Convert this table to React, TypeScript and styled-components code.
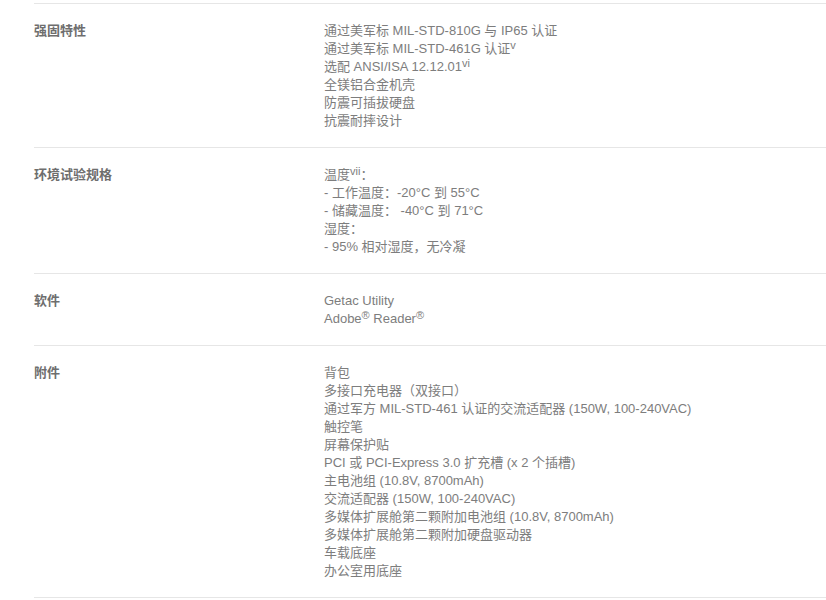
import React from 'react';
import styled, { createGlobalStyle } from 'styled-components';

const GlobalStyle = createGlobalStyle`
  html, body {
    margin: 0;
    padding: 0;
    background: #fff;
  }
  body {
    font-family: "Liberation Sans", "Noto Sans CJK SC", sans-serif;
    font-size: 13px;
  }
`;

const SpecTable = styled.section`
  padding-top: 3px;
  margin-left: 34px;
  border-bottom: 1px solid #e6e6e6;
`;

const SpecRow = styled.div`
  display: grid;
  grid-template-columns: 290px 1fr;
  border-top: 1px solid #e6e6e6;
  padding: 18px 0 17px;
`;

const Label = styled.div`
  font-weight: bold;
  color: #6e6e6e;
  line-height: 18px;
`;

const Values = styled.ul`
  list-style: none;
  margin: 0;
  padding: 0;
  color: #7d7d7d;
  line-height: 18px;
`;

const Sup = styled.sup`
  font-size: 11px;
  line-height: 0;
  vertical-align: 4px;
`;

type Spec = { label: string; items: React.ReactNode[] };

const specs: Spec[] = [
  {
    label: '强固特性',
    items: [
      '通过美军标 MIL-STD-810G 与 IP65 认证',
      <>通过美军标 MIL-STD-461G 认证<Sup>v</Sup></>,
      <>选配 ANSI/ISA 12.12.01<Sup>vi</Sup></>,
      '全镁铝合金机壳',
      '防震可插拔硬盘',
      '抗震耐摔设计',
    ],
  },
  {
    label: '环境试验规格',
    items: [
      <>温度<Sup>vii</Sup>：</>,
      '- 工作温度：-20°C 到 55°C',
      '- 储藏温度： -40°C 到 71°C',
      '湿度：',
      '- 95% 相对湿度，无冷凝',
    ],
  },
  {
    label: '软件',
    items: ['Getac Utility', <>Adobe<Sup>®</Sup> Reader<Sup>®</Sup></>],
  },
  {
    label: '附件',
    items: [
      '背包',
      '多接口充电器（双接口）',
      '通过军方 MIL-STD-461 认证的交流适配器 (150W, 100-240VAC)',
      '触控笔',
      '屏幕保护贴',
      'PCI 或 PCI-Express 3.0 扩充槽 (x 2 个插槽)',
      '主电池组 (10.8V, 8700mAh)',
      '交流适配器 (150W, 100-240VAC)',
      '多媒体扩展舱第二颗附加电池组 (10.8V, 8700mAh)',
      '多媒体扩展舱第二颗附加硬盘驱动器',
      '车载底座',
      '办公室用底座',
    ],
  },
];

const App = () => {
  return (
    <>
      <GlobalStyle />
      <SpecTable>
        {specs.map((spec) => (
          <SpecRow key={spec.label}>
            <Label>{spec.label}</Label>
            <Values>
              {spec.items.map((item, i) => (
                <li key={i}>{item}</li>
              ))}
            </Values>
          </SpecRow>
        ))}
      </SpecTable>
    </>
  );
};

export default App;
